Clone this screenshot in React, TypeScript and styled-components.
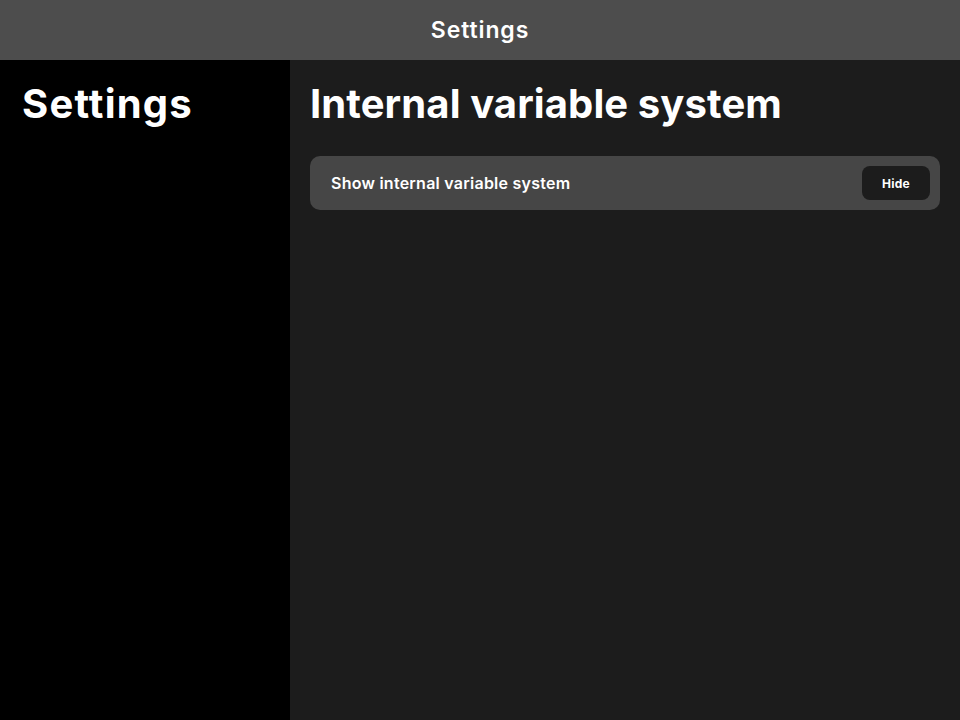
import React from 'react';
import styled, { createGlobalStyle } from 'styled-components';

const GlobalStyle = createGlobalStyle`
  html, body {
    margin: 0;
    padding: 0;
    background: #1c1c1c;
  }
  body {
    font-family: Inter, 'Noto Sans', sans-serif;
    color: #ffffff;
  }
  * {
    box-sizing: border-box;
  }
`;

const Screen = styled.div`
  width: 960px;
  height: 720px;
  display: flex;
  flex-direction: column;
  overflow: hidden;
`;

const TopBar = styled.header`
  height: 60px;
  flex-shrink: 0;
  display: flex;
  align-items: center;
  justify-content: center;
  background: #4d4d4d;
`;

const TopTitle = styled.h1`
  margin: 0;
  font-size: 23px;
  font-weight: 600;
  letter-spacing: 0.9px;
  color: #ffffff;
`;

const Body = styled.div`
  flex: 1;
  display: flex;
`;

const Sidebar = styled.nav`
  width: 290px;
  flex-shrink: 0;
  background: #000000;
  padding: 20px 22px;
`;

const Main = styled.main`
  flex: 1;
  background: #1c1c1c;
  padding: 20px 20px;
  display: flex;
  flex-direction: column;
  gap: 28px;
`;

const PageTitle = styled.h2<{ $spacing?: number }>`
  margin: 0;
  font-size: 40px;
  line-height: 48px;
  font-weight: 700;
  letter-spacing: ${({ $spacing }) => $spacing ?? 0}px;
  color: #ffffff;
`;

const SettingRow = styled.div`
  height: 54px;
  display: flex;
  align-items: center;
  justify-content: space-between;
  padding: 0 10px 0 21px;
  background: #464646;
  border-radius: 10px;
`;

const SettingLabel = styled.span`
  font-size: 16px;
  font-weight: 600;
  letter-spacing: 0.25px;
  color: #ffffff;
`;

const ToggleButton = styled.button`
  width: 68px;
  height: 34px;
  border: none;
  border-radius: 8px;
  background: #1c1c1c;
  color: #ffffff;
  font-family: inherit;
  font-size: 12px;
  font-weight: 700;
  letter-spacing: 0.3px;
  cursor: pointer;
`;

const App: React.FC = () => {
  return (
    <>
      <GlobalStyle />
      <Screen>
        <TopBar>
          <TopTitle>Settings</TopTitle>
        </TopBar>
        <Body>
          <Sidebar>
            <PageTitle $spacing={1.2}>Settings</PageTitle>
          </Sidebar>
          <Main>
            <PageTitle $spacing={0.1}>Internal variable system</PageTitle>
            <SettingRow>
              <SettingLabel>Show internal variable system</SettingLabel>
              <ToggleButton>Hide</ToggleButton>
            </SettingRow>
          </Main>
        </Body>
      </Screen>
    </>
  );
};

export default App;
